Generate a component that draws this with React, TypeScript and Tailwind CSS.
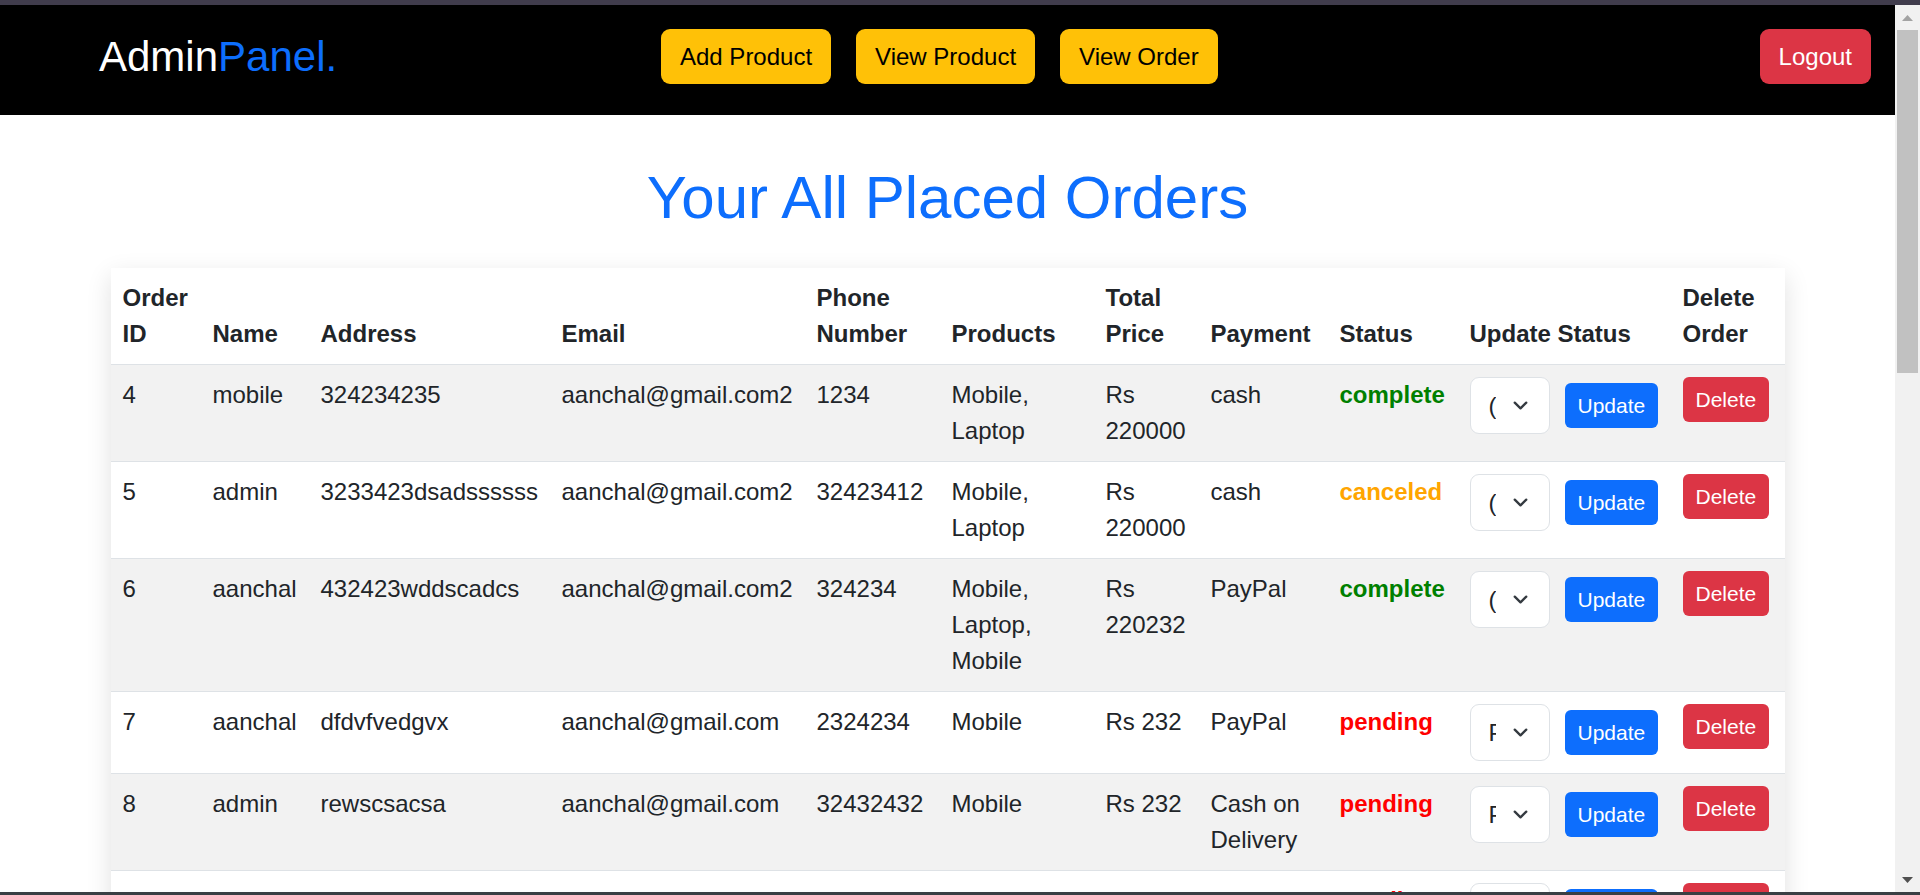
import { ChevronDown } from 'lucide-react'

type Order = {
  id: number
  name: string
  address: string
  email: string
  phone: string
  products: string
  total: string
  payment: string
  status: 'complete' | 'canceled' | 'pending'
  current: string
}

const orders: Order[] = [
  { id: 4, name: 'mobile', address: '324234235', email: 'aanchal@gmail.com2', phone: '1234', products: 'Mobile, Laptop', total: 'Rs 220000', payment: 'cash', status: 'complete', current: '(' },
  { id: 5, name: 'admin', address: '3233423dsadssssss', email: 'aanchal@gmail.com2', phone: '32423412', products: 'Mobile, Laptop', total: 'Rs 220000', payment: 'cash', status: 'canceled', current: '(' },
  { id: 6, name: 'aanchal', address: '432423wddscadcs', email: 'aanchal@gmail.com2', phone: '324234', products: 'Mobile, Laptop, Mobile', total: 'Rs 220232', payment: 'PayPal', status: 'complete', current: '(' },
  { id: 7, name: 'aanchal', address: 'dfdvfvedgvx', email: 'aanchal@gmail.com', phone: '2324234', products: 'Mobile', total: 'Rs 232', payment: 'PayPal', status: 'pending', current: 'P' },
  { id: 8, name: 'admin', address: 'rewscsacsa', email: 'aanchal@gmail.com', phone: '32432432', products: 'Mobile', total: 'Rs 232', payment: 'Cash on Delivery', status: 'pending', current: 'P' },
  { id: 9, name: 'mobile', address: 'dsdsfsdcsd', email: 'aanchal@gmail.com2', phone: '3423423', products: 'Mobile', total: 'Rs 232', payment: 'Cash on Delivery', status: 'pending', current: 'P' },
]

const statusStyles: Record<Order['status'], string> = {
  complete: 'text-[#008000]',
  canceled: 'text-[#ffa500]',
  pending: 'text-[#ff0000]',
}

const columns = [
  { label: 'Order ID', width: 'w-[90px]' },
  { label: 'Name', width: 'w-[108px]' },
  { label: 'Address', width: 'w-[241px]' },
  { label: 'Email', width: 'w-[255px]' },
  { label: 'Phone Number', width: 'w-[135px]' },
  { label: 'Products', width: 'w-[154px]' },
  { label: 'Total Price', width: 'w-[105px]' },
  { label: 'Payment', width: 'w-[129px]' },
  { label: 'Status', width: 'w-[130px]' },
  { label: 'Update Status', width: 'w-[213px]' },
  { label: 'Delete Order', width: 'w-[114px]' },
]

const cell = 'px-[12px] py-[12px] align-top border-b border-[#dee2e6]'

function Navbar() {
  return (
    <nav className="flex h-[110px] items-start bg-black pl-[99px] pr-[24px] pt-[24px]">
      <div className="mt-[3px] w-[562px] text-[42px] leading-[50px] text-white">
        Admin<span className="text-[#0d6efd]">Panel.</span>
      </div>
      <div className="flex gap-[25px]">
        {['Add Product', 'View Product', 'View Order'].map((label) => (
          <button
            key={label}
            className="flex h-[55px] items-center rounded-[9px] bg-[#ffc107] px-[19px] text-[24px] leading-[36px] text-black"
          >
            {label}
          </button>
        ))}
      </div>
      <button className="ml-auto flex h-[55px] items-center rounded-[9px] bg-[#dc3545] px-[19px] text-[24px] leading-[36px] text-white">
        Logout
      </button>
    </nav>
  )
}

function StatusSelect({ value }: { value: string }) {
  return (
    <div className="relative flex h-[57px] w-[80px] shrink-0 items-center overflow-hidden rounded-[9px] border border-[#dee2e6] bg-white pl-[18px]">
      <span className="block w-[7px] overflow-hidden whitespace-nowrap text-[24px] leading-[36px] text-[#212529]">
        {value}
      </span>
      <ChevronDown className="absolute right-[17px] top-[16px] h-[23px] w-[23px] text-[#343a40]" strokeWidth={2.4} />
    </div>
  )
}

function OrdersTable() {
  return (
    <div className="mx-auto mt-[34px] w-[1674px] bg-white shadow-[0_8px_24px_rgba(0,0,0,0.12)]">
      <table className="w-full table-fixed border-collapse text-[24px] leading-[36px] text-[#212529]">
        <colgroup>
          {columns.map((column) => (
            <col key={column.label} className={column.width} />
          ))}
        </colgroup>
        <thead>
          <tr>
            {columns.map((column) => (
              <th key={column.label} className="border-b border-[#dee2e6] px-[12px] py-[12px] text-left align-bottom font-bold">
                {column.label}
              </th>
            ))}
          </tr>
        </thead>
        <tbody>
          {orders.map((order, index) => (
            <tr key={order.id} className={index % 2 === 0 ? 'bg-[#f2f2f2]' : 'bg-white'}>
              <td className={cell}>{order.id}</td>
              <td className={`${cell} whitespace-nowrap`}>{order.name}</td>
              <td className={`${cell} whitespace-nowrap`}>{order.address}</td>
              <td className={`${cell} whitespace-nowrap`}>{order.email}</td>
              <td className={`${cell} whitespace-nowrap`}>{order.phone}</td>
              <td className={cell}>{order.products}</td>
              <td className={cell}>{order.total}</td>
              <td className={cell}>{order.payment}</td>
              <td className={`${cell} whitespace-nowrap font-bold ${statusStyles[order.status]}`}>{order.status}</td>
              <td className={cell}>
                <div className="flex items-center gap-[15px]">
                  <StatusSelect value={order.current} />
                  <button className="h-[45px] rounded-[6px] bg-[#0d6efd] px-[13px] text-[21px] leading-[31px] text-white">
                    Update
                  </button>
                </div>
              </td>
              <td className={cell}>
                <button className="h-[45px] rounded-[6px] bg-[#dc3545] px-[13px] text-[21px] leading-[31px] text-white">
                  Delete
                </button>
              </td>
            </tr>
          ))}
        </tbody>
      </table>
    </div>
  )
}

function Scrollbar() {
  return (
    <div className="relative flex w-[25px] shrink-0 flex-col items-center bg-[#f1f1f1]">
      <svg className="mt-[10px] h-[6px] w-[11px]" viewBox="0 0 11 6">
        <polygon points="5.5,0 11,6 0,6" fill="#a3a3a3" />
      </svg>
      <div className="mt-[9px] h-[343px] w-[21px] bg-[#c1c1c1]" />
      <svg className="mb-[9px] mt-auto h-[6px] w-[11px]" viewBox="0 0 11 6">
        <polygon points="0,0 11,0 5.5,6" fill="#505050" />
      </svg>
    </div>
  )
}

export default function App() {
  return (
    <div className="flex h-[895px] w-[1920px] flex-col overflow-hidden bg-white font-['Liberation_Sans',Arial,sans-serif]">
      <div className="h-[5px] shrink-0 bg-[#403c4c]" />
      <div className="flex min-h-0 flex-1">
        <div className="min-w-0 flex-1 overflow-hidden">
          <Navbar />
          <h1 className="mt-[47px] text-center text-[60px] leading-[72px] text-[#0d6efd]">Your All Placed Orders</h1>
          <OrdersTable />
        </div>
        <Scrollbar />
      </div>
      <div className="h-[3px] shrink-0 bg-[#3a3f44]" />
    </div>
  )
}
